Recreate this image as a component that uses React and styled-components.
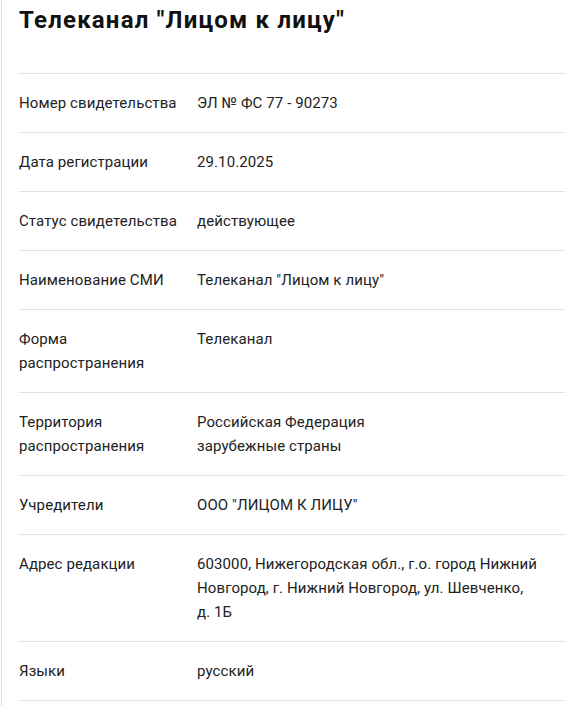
import React from 'react';
import styled, {createGlobalStyle} from 'styled-components';

const GlobalStyle = createGlobalStyle`
    html, body {
        margin: 0;
        padding: 0;
        background: #fff;
    }
    body {
        font-family: Roboto, "Liberation Sans", sans-serif;
        color: #222;
    }
`;

const rows = [
    {label: 'Номер свидетельства', value: ['ЭЛ № ФС 77 - 90273']},
    {label: 'Дата регистрации', value: ['29.10.2025']},
    {label: 'Статус свидетельства', value: ['действующее']},
    {label: 'Наименование СМИ', value: ['Телеканал "Лицом к лицу"']},
    {label: 'Форма распространения', value: ['Телеканал']},
    {label: 'Территория распространения', value: ['Российская Федерация', 'зарубежные страны']},
    {label: 'Учредители', value: ['ООО "ЛИЦОМ К ЛИЦУ"']},
    {label: 'Адрес редакции', value: ['603000, Нижегородская обл., г.о. город Нижний Новгород, г. Нижний Новгород, ул. Шевченко, д.\u00a01Б']},
    {label: 'Языки', value: ['русский']},
];

const App = () => {
    return (
        <>
            <GlobalStyle/>
            <Page>
                <Title>Телеканал "Лицом к лицу"</Title>
                <Table>
                    {rows.map(row => (
                        <Row key={row.label}>
                            <Label>{row.label}</Label>
                            <Value>
                                {row.value.map(line => <div key={line}>{line}</div>)}
                            </Value>
                        </Row>
                    ))}
                </Table>
            </Page>
        </>
    );
};

const Page = styled.div`
    min-height: 706px;
    box-sizing: border-box;
    border-left: 1px solid #dcdcdc;
    margin-left: 1px;
    padding-left: 17px;
`

const Title = styled.h1`
    margin: 0;
    padding-top: 5px;
    height: 68px;
    font-size: 24px;
    line-height: 30px;
    letter-spacing: 1.2px;
    font-weight: 700;
    color: #111;
`

const Table = styled.div`
    border-top: 1px solid #e0e0e0;
`

const Row = styled.div`
    display: grid;
    grid-template-columns: 178px 356px;
    padding: 17px 0;
    border-bottom: 1px solid #e0e0e0;
    font-size: 15px;
    line-height: 24px;
    letter-spacing: 0.1px;
`

const Label = styled.div`
    padding-right: 16px;
`

const Value = styled.div`
`

export default App;
